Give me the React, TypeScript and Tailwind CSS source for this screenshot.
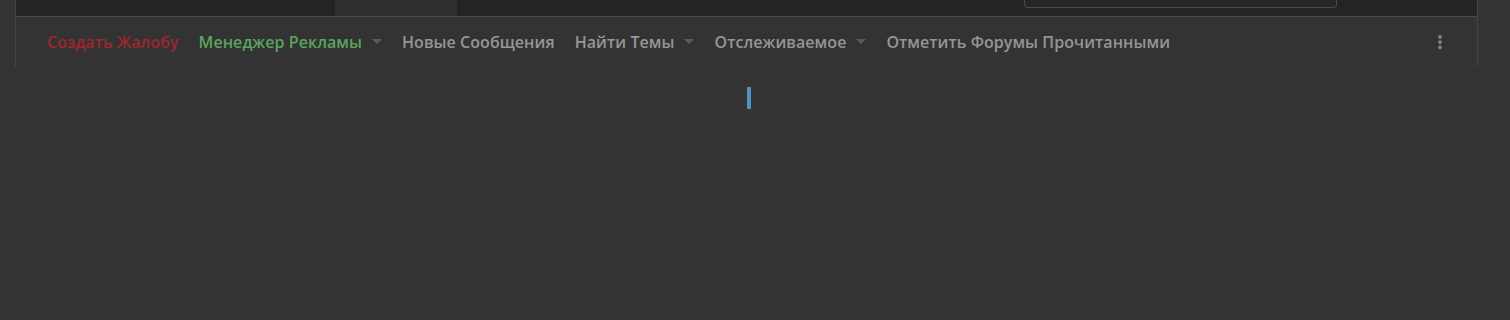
import { EllipsisVertical } from "lucide-react"

const Caret = () => (
  <span className="ml-[10px] inline-block h-0 w-0 border-x-[5px] border-t-[5px] border-x-transparent border-t-[#5c5c5c]" />
)

const items = [
  { label: "Создать Жалобу", color: "text-[#a3262b]", caret: false },
  { label: "Менеджер Рекламы", color: "text-[#5aa55a]", caret: true },
  { label: "Новые Сообщения", color: "text-[#969696]", caret: false },
  { label: "Найти Темы", color: "text-[#969696]", caret: true },
  { label: "Отслеживаемое", color: "text-[#969696]", caret: true },
  { label: "Отметить Форумы Прочитанными", color: "text-[#969696]", caret: false },
]

export default function App() {
  return (
    <div className="h-[320px] w-full bg-[#333333] font-['Open_Sans',sans-serif]">
      <div className="ml-[15px] mr-[32px] border-x border-[#464646]">
        <div className="flex h-[17px] items-start border-b border-[#4a4a4a] bg-[#242424]">
          <div className="ml-[319px] h-full w-[122px] bg-[#2f2f2f]" />
          <div className="ml-[567px] h-[8px] w-[313px] rounded-b-sm border-x border-b border-[#4b4b4b] bg-[#262626]" />
        </div>
        <div className="flex h-[49px] items-center pl-[21px] pr-[28px]">
          {items.map((it) => (
            <a key={it.label} className={`flex items-center px-[10px] text-[16px] font-semibold tracking-[0.06px] ${it.color}`}>
              {it.label}
              {it.caret && <Caret />}
            </a>
          ))}
          <button className="ml-auto text-[#8a8a8a]">
            <EllipsisVertical className="h-[18px] w-[18px]" strokeWidth={3} />
          </button>
        </div>
      </div>
      <div className="flex justify-center pt-[21px]">
        <div className="ml-[-12px] h-[22px] w-[4px] bg-[#4c93c4]" />
      </div>
    </div>
  )
}
